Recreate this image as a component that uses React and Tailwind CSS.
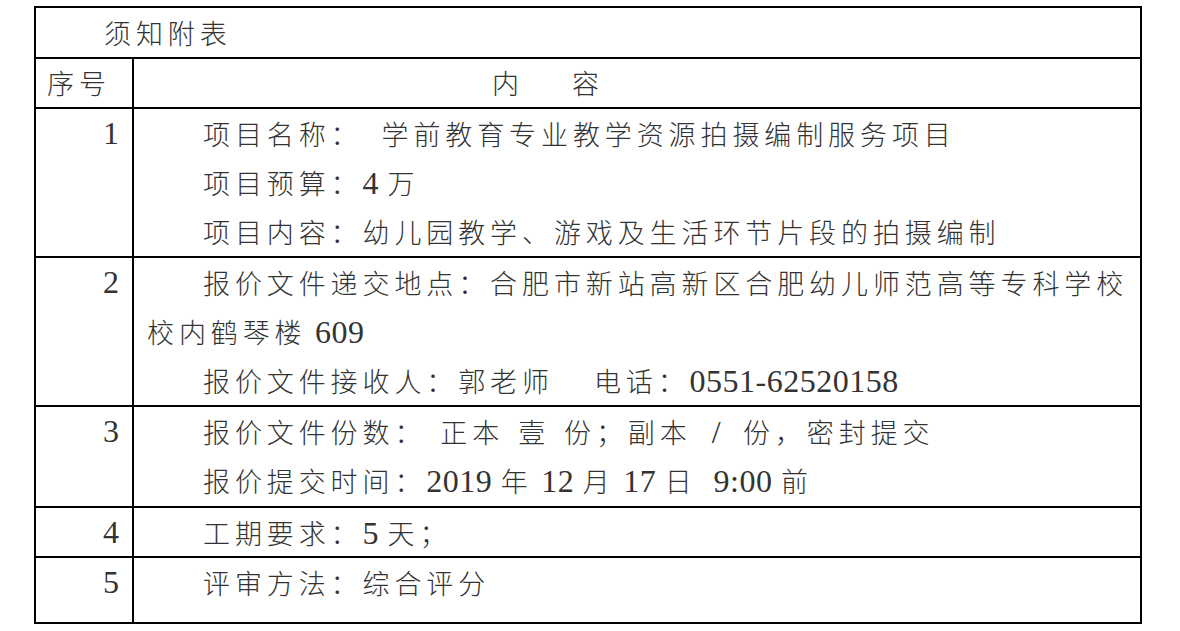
import React from 'react';

// {n} in a line is a fixed gap of n px
const gaps = {
  14: 'w-[14px]',
  19: 'w-[19px]',
  20: 'w-[20px]',
  22: 'w-[22px]',
  40: 'w-[40px]',
};

// ASCII runs use a Times-like face; CJK runs get tracking to hit the grid
function Run({ text }) {
  const parts = text.split(/(\{\d+\}|[\x20-\x7a]+)/).filter(Boolean);
  return parts.map((p, i) => {
    const gap = p.match(/^\{(\d+)\}$/);
    if (gap) return <span key={i} className={`inline-block ${gaps[gap[1]]}`} />;
    if (/^[\x20-\x7a]+$/.test(p))
      return (
        <span key={i} className="font-[Liberation_Serif,serif] font-normal text-[32px] tracking-[0.5px] leading-none">{p}</span>
      );
    return <span key={i}>{p}</span>;
  });
}

function Line({ indent = true, text }) {
  return (
    <div className={`h-[49px] leading-[49px] whitespace-pre ${indent ? 'pl-[56px]' : ''}`}>
      <Run text={text} />
    </div>
  );
}

const rows = [
  {
    no: '1',
    h: 'h-[147px]',
    lines: [
      { text: '项目名称：{19}学前教育专业教学资源拍摄编制服务项目' },
      { text: '项目预算：4 万' },
      { text: '项目内容：幼儿园教学、游戏及生活环节片段的拍摄编制' },
    ],
  },
  {
    no: '2',
    h: 'h-[147px]',
    lines: [
      { text: '报价文件递交地点：合肥市新站高新区合肥幼儿师范高等专科学校' },
      { text: '校内鹤琴楼 609', indent: false },
      { text: '报价文件接收人：郭老师{40}电话：0551-62520158' },
    ],
  },
  {
    no: '3',
    h: 'h-[99px]',
    lines: [
      { text: '报价文件份数：{14}正本{14}壹{14}份；副本{20}/{22}份，密封提交' },
      { text: '报价提交时间：2019 年 12 月 17 日  9:00 前' },
    ],
  },
  { no: '4', h: 'h-[48px]', lines: [{ text: '工期要求：5 天；' }] },
  { no: '5', h: 'h-[64px]', lines: [{ text: '评审方法：综合评分' }] },
];

export default function App() {
  return (
    <div className="w-[1180px] h-[631px] bg-white pt-[6px] font-[Noto_Sans_CJK_SC,sans-serif] font-light text-[27px] tracking-[4.9px] text-[#333]">
      <div className="ml-[34px] w-[1108px] border-2 border-black">
        <div className="h-[49px] leading-[49px] pl-[68px]">须知附表</div>

        <div className="flex h-[50px] border-t-2 border-black">
          <div className="w-[98px] leading-[48px] pl-[11px] border-r-2 border-black">序号</div>
          <div className="flex-1 leading-[48px] pl-[358px] whitespace-pre">
            内<span className="inline-block w-[48px]" />容
          </div>
        </div>

        {rows.map((r) => (
          <div key={r.no} className="flex border-t-2 border-black">
            <div className={`w-[98px] ${r.h} border-r-2 border-black text-right pr-[13px] font-[Liberation_Serif,serif] font-normal text-[32px] tracking-normal leading-[49px]`}>
              {r.no}
            </div>
            <div className={`flex-1 ${r.h} pl-[13px]`}>
              {r.lines.map((l, i) => (
                <Line key={i} text={l.text} indent={l.indent !== false} />
              ))}
            </div>
          </div>
        ))}
      </div>
    </div>
  );
}
